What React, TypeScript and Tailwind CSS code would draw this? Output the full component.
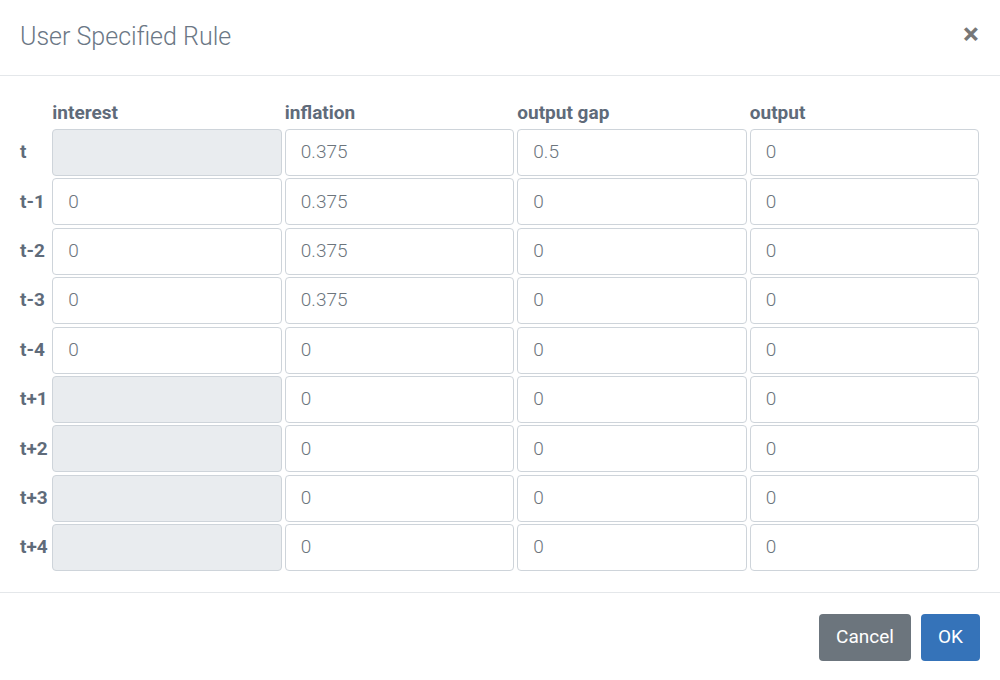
import React from "react";

const cols = ["interest", "inflation", "output gap", "output"];
type Cell = string | null;
const rows: { label: string; cells: Cell[] }[] = [
  { label: "t", cells: [null, "0.375", "0.5", "0"] },
  { label: "t-1", cells: ["0", "0.375", "0", "0"] },
  { label: "t-2", cells: ["0", "0.375", "0", "0"] },
  { label: "t-3", cells: ["0", "0.375", "0", "0"] },
  { label: "t-4", cells: ["0", "0", "0", "0"] },
  { label: "t+1", cells: [null, "0", "0", "0"] },
  { label: "t+2", cells: [null, "0", "0", "0"] },
  { label: "t+3", cells: [null, "0", "0", "0"] },
  { label: "t+4", cells: [null, "0", "0", "0"] },
];

export default function App() {
  return (
    <div
      className="w-[1000px] h-[680px] bg-white flex flex-col overflow-hidden"
      style={{ fontFamily: "Roboto, 'Liberation Sans', sans-serif" }}
    >
      <div className="h-[76px] shrink-0 border-b border-[#e4e7ea] flex items-center justify-between px-5">
        <h1 className="text-[25px] font-light text-[#6b7785] leading-none -mt-[2px]">
          User Specified Rule
        </h1>
        <button className="text-[30px] font-bold text-[#777] leading-none mr-[1px] -mt-[7px]">
          ×
        </button>
      </div>
      <div className="pl-5 pr-[21px] pt-[25px] pb-[21px]">
        <div className="grid grid-cols-[29px_repeat(4,1fr)] gap-x-[3.33px] h-[24px] mb-[4px]">
          <div />
          {cols.map((c) => (
            <div key={c} className="text-[19px] font-bold text-[#5f6b7a] leading-[24px]">
              {c}
            </div>
          ))}
        </div>
        <div className="grid grid-cols-[29px_repeat(4,1fr)] gap-x-[3.33px] gap-y-[2.375px]">
          {rows.map((r) => (
            <React.Fragment key={r.label}>
              <div className="h-[47px] flex items-center text-[19px] font-bold text-[#5f6b7a] whitespace-nowrap">
                {r.label}
              </div>
              {r.cells.map((v, i) =>
                v === null ? (
                  <div
                    key={i}
                    className="h-[47px] rounded-[4px] border border-[#ced4da] bg-[#e9ecef]"
                  />
                ) : (
                  <div
                    key={i}
                    className="h-[47px] rounded-[4px] border border-[#ced4da] bg-white flex items-center pl-[15px] text-[19px] font-light text-[#6c757d]"
                  >
                    {v}
                  </div>
                )
              )}
            </React.Fragment>
          ))}
        </div>
      </div>
      <div className="border-t border-[#e4e7ea] flex justify-end gap-[10px] pl-5 pr-[20px] pt-[21px]">
        <button className="h-[47px] w-[92px] rounded-[4px] bg-[#6c757d] text-white text-[19px]">
          Cancel
        </button>
        <button className="h-[47px] w-[59px] rounded-[4px] bg-[#3573b9] text-white text-[19px]">
          OK
        </button>
      </div>
    </div>
  );
}
